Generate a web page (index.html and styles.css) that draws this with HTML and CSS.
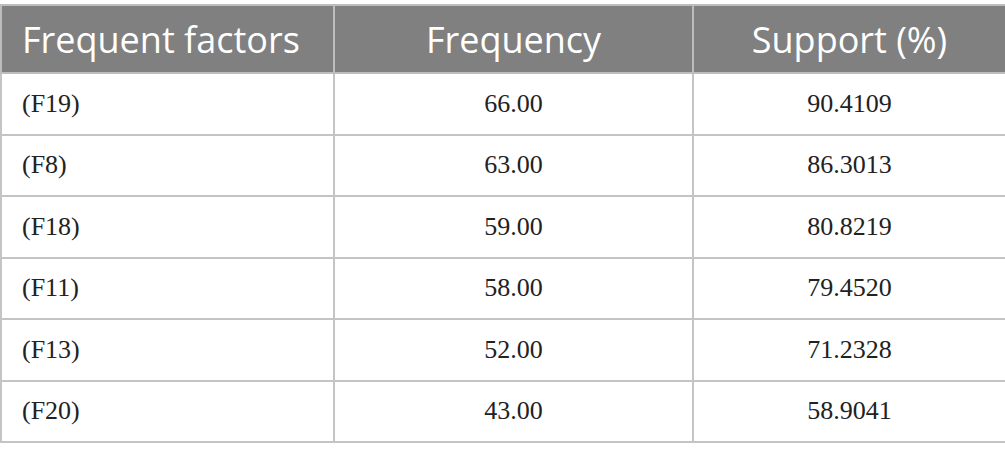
FILE: index.html
```html
<!DOCTYPE html>
<html>
<head>
<meta charset="utf-8">
<link rel="stylesheet" href="styles.css">
</head>
<body>
<table class="data">
  <colgroup>
    <col class="c1">
    <col class="c2">
    <col class="c3">
  </colgroup>
  <thead>
    <tr><th class="left">Frequent factors</th><th>Frequency</th><th>Support (%)</th></tr>
  </thead>
  <tbody>
    <tr><td class="left">(F19)</td><td>66.00</td><td>90.4109</td></tr>
    <tr><td class="left">(F8)</td><td>63.00</td><td>86.3013</td></tr>
    <tr><td class="left">(F18)</td><td>59.00</td><td>80.8219</td></tr>
    <tr><td class="left">(F11)</td><td>58.00</td><td>79.4520</td></tr>
    <tr><td class="left">(F13)</td><td>52.00</td><td>71.2328</td></tr>
    <tr><td class="left">(F20)</td><td>43.00</td><td>58.9041</td></tr>
  </tbody>
</table>
</body>
</html>
```
FILE: styles.css
```css
html, body {
  margin: 0;
  padding: 0;
  background: #ffffff;
}
body {
  padding-top: 4px;
}
.data {
  border-collapse: collapse;
  width: 1005px;
  table-layout: fixed;
}
.c1 { width: 333px; }
.c2 { width: 359px; }
.c3 { width: 313px; }
.data th, .data td {
  border: 2px solid #c4c4c4;
  text-align: center;
  vertical-align: middle;
  padding: 0 20px;
}
.data th {
  background: #808080;
  color: #ffffff;
  font-family: "Open Sans", sans-serif;
  font-weight: 400;
  font-size: 36px;
  height: 66px;
  border-color: #bdbdbd;
}
.data td {
  color: #222222;
  font-family: "Liberation Serif", serif;
  font-size: 26px;
  height: 59.5px;
}
.data .left {
  text-align: left;
}
```
